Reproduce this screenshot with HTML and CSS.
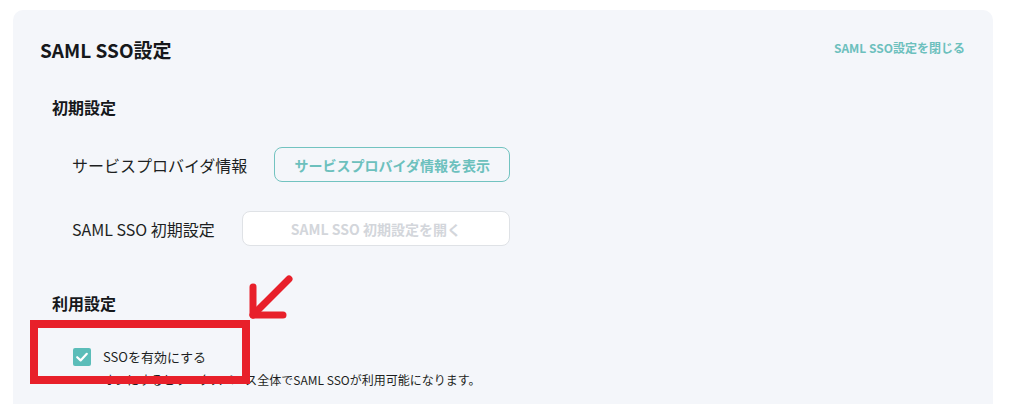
FILE: index.html
```html
<!DOCTYPE html>
<html lang="ja">
<head>
<meta charset="utf-8">
<title>SAML SSO設定</title>
<link rel="stylesheet" href="styles.css">
</head>
<body>
<div class="card">
  <div class="card-header">
    <h2 class="title">SAML SSO設定</h2>
    <a class="close-link" href="#">SAML SSO設定を閉じる</a>
  </div>

  <section class="section">
    <h3 class="section-title">初期設定</h3>
    <div class="rows">
      <div class="row">
        <span class="row-label">サービスプロバイダ情報</span>
        <button class="btn btn-outline" type="button">サービスプロバイダ情報を表示</button>
      </div>
      <div class="row">
        <span class="row-label">SAML SSO 初期設定</span>
        <button class="btn btn-disabled" type="button" disabled>SAML SSO 初期設定を開く</button>
      </div>
    </div>
  </section>

  <section class="section section-usage">
    <h3 class="section-title">利用設定</h3>
    <label class="check-row">
      <span class="checkbox">
        <svg viewBox="0 0 18 18" width="18" height="18" aria-hidden="true">
          <path d="M4.2 9.2 L7.6 12.4 L13.8 5.8" fill="none" stroke="#ffffff" stroke-width="2.2" stroke-linecap="round" stroke-linejoin="round"/>
        </svg>
      </span>
      <span class="check-label">SSOを有効にする</span>
    </label>
    <p class="check-desc">オンにするとワークスペース全体でSAML SSOが利用可能になります。</p>
  </section>
</div>

<div class="highlight-box"></div>
<svg class="highlight-arrow" viewBox="0 0 60 56" width="60" height="56" aria-hidden="true">
  <path d="M49 9 L13 45" fill="none" stroke="#e8202a" stroke-width="7" stroke-linecap="round"/>
  <path d="M13 17 L13 45 L43 45" fill="none" stroke="#e8202a" stroke-width="7" stroke-linecap="round" stroke-linejoin="round"/>
</svg>
</body>
</html>
```

FILE: styles.css
```css
* { box-sizing: border-box; }

html, body {
  margin: 0;
  background: #ffffff;
}

body {
  padding: 10px 28px 0 13px;
  font-family: "Noto Sans CJK JP", "Noto Sans", sans-serif;
  color: #1d1f22;
  position: relative;
  height: 404px;
}

.card {
  background: #f4f6fa;
  border-radius: 10px 10px 0 0;
  padding: 26px 28px 0 27px;
  height: 394px;
}

.card-header {
  display: flex;
  justify-content: space-between;
  align-items: center;
  height: 28px;
}

.title {
  margin: 0;
  font-size: 19px;
  font-weight: 700;
  line-height: 28px;
  color: #16181b;
}

.close-link {
  font-size: 12px;
  font-weight: 700;
  color: #6cc0bd;
  text-decoration: none;
  line-height: 18px;
  margin-bottom: 4px;
}

.section {
  padding-left: 12px;
  margin-top: 31px;
}

.section-title {
  margin: 0;
  font-size: 16px;
  font-weight: 700;
  line-height: 24px;
  color: #16181b;
}

.rows {
  display: flex;
  flex-direction: column;
  gap: 29px;
  margin-top: 28px;
  padding-left: 20px;
  width: 458px;
}

.row {
  display: flex;
  align-items: center;
  gap: 27px;
}

.row-label {
  font-size: 16px;
  line-height: 24px;
  color: #1d1f22;
  white-space: nowrap;
}

.btn {
  flex: 1;
  height: 35px;
  border-radius: 8px;
  font-family: inherit;
  font-size: 14px;
  font-weight: 700;
  line-height: 20px;
  padding: 0;
  white-space: nowrap;
}

.btn-outline {
  background: transparent;
  border: 1px solid #72c3c0;
  color: #6cc0bd;
}

.btn-disabled {
  background: #ffffff;
  border: 1px solid #dfe2e6;
  color: #d3d6db;
}

.section-usage {
  margin-top: 45px;
}

.check-row {
  display: flex;
  align-items: center;
  gap: 12px;
  margin-top: 32px;
  padding-left: 21px;
  height: 20px;
}

.checkbox {
  width: 18px;
  height: 18px;
  border-radius: 2px;
  background: #5bbdb9;
  display: flex;
}

.check-label {
  font-size: 13px;
  line-height: 20px;
  color: #1d1f22;
}

.check-desc {
  margin: 4px 0 0 0;
  padding-left: 51px;
  font-size: 12px;
  line-height: 18px;
  color: #1d1f22;
}

.highlight-box {
  position: absolute;
  left: 30px;
  top: 320px;
  width: 220px;
  height: 64px;
  border: 8px solid #e8202a;
}

.highlight-arrow {
  position: absolute;
  left: 240px;
  top: 270px;
}
```
